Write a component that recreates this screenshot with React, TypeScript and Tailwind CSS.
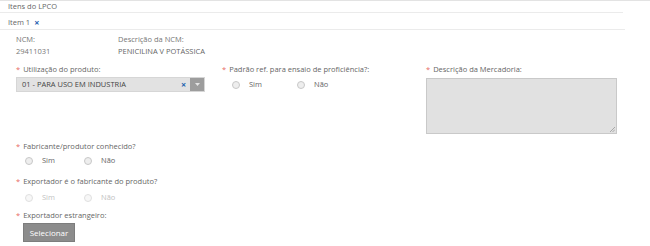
import React from "react";

const Req = () => <span className="text-[#e8685f] mr-[3px]">*</span>;

function Radio({ label, disabled }: { label: string; disabled?: boolean }) {
  return (
    <div className={`flex items-center ${disabled ? "text-[#c2c2c2]" : "text-[#666]"}`}>
      <span
        className={`w-[8px] h-[8px] rounded-full border ${
          disabled ? "border-[#e0e0e0] bg-[#f7f7f7]" : "border-[#c8c8c8] bg-[#eeeeee]"
        }`}
      />
      <span className="ml-[9px]">{label}</span>
    </div>
  );
}

export default function App() {
  return (
    <div
      className="w-[650px] h-[246px] bg-white text-[7.5px] text-[#555] overflow-hidden"
      style={{ fontFamily: '"Open Sans", sans-serif' }}
    >
      <div className="border-t border-[#e3e3e3]">
        <div className="w-[623px] h-[12px] border-b border-[#ebebeb] pl-[8px] flex items-center text-[#666]">
          Itens do LPCO
        </div>
        <div className="w-[625px] h-[17px] border-b border-[#ebebeb] pl-[8px] flex items-center pt-[4px] text-[#666]">
          Item 1
          <span className="ml-[4px] text-[#1e62b0] font-bold text-[9px] leading-[12px]">×</span>
        </div>
        <div className="flex pl-[16px] pt-[4px]">
          <div className="w-[102px]">
            <div className="h-[12px] flex items-center text-[#777]">NCM:</div>
            <div className="h-[12px] flex items-center text-[#777]">29411031</div>
          </div>
          <div>
            <div className="h-[12px] flex items-center text-[#777]">Descrição da NCM:</div>
            <div className="h-[12px] flex items-center text-[#666]">PENICILINA V POTÁSSICA</div>
          </div>
        </div>
        <div className="flex pl-[16px] pt-[6px]">
          <div className="w-[189px]">
            <div className="h-[12px] flex items-center text-[#666]">
              <Req />
              Utilização do produto:
            </div>
            <div className="mt-[1px] h-[15px] flex bg-[#e2e2e2] border border-[#d6d6d6]">
              <div className="flex-1 flex items-center pl-[5px] text-[#444]">01 - PARA USO EM INDUSTRIA</div>
              <div className="w-[13px] flex items-center justify-center text-[#1e62b0] font-bold text-[9px]">×</div>
              <div className="w-[14px] bg-[#9d9d9d] flex items-center justify-center">
                <svg width="5" height="3" viewBox="0 0 5 3">
                  <path d="M0 0 L5 0 L2.5 3 Z" fill="#e5e5e5" />
                </svg>
              </div>
            </div>
          </div>
          <div className="ml-[17px] w-[204px]">
            <div className="h-[12px] flex items-center text-[#666]">
              <Req />
              Padrão ref. para ensaio de proficiência?:
            </div>
            <div className="flex mt-[3px] pl-[10px] h-[12px] items-center">
              <div className="w-[65px]">
                <Radio label="Sim" />
              </div>
              <Radio label="Não" />
            </div>
          </div>
          <div>
            <div className="h-[12px] flex items-center text-[#666]">
              <Req />
              Descrição da Mercadoria:
            </div>
            <div className="relative mt-[2px] w-[191px] h-[56px] bg-[#e1e1e1] border border-[#c9c9c9]">
              <svg className="absolute right-[1px] bottom-[1px]" width="5" height="5" viewBox="0 0 5 5">
                <path d="M5 0 L0 5 M5 2.5 L2.5 5" stroke="#999" strokeWidth="0.8" />
              </svg>
            </div>
          </div>
        </div>
        <div className="pl-[16px] mt-[7px]">
          <div className="h-[12px] flex items-center text-[#666]">
            <Req />
            Fabricante/produtor conhecido?
          </div>
          <div className="flex mt-[2px] pl-[9px] h-[12px] items-center">
            <div className="w-[59px]">
              <Radio label="Sim" />
            </div>
            <Radio label="Não" />
          </div>
          <div className="mt-[9px] h-[12px] flex items-center text-[#666]">
            <Req />
            Exportador é o fabricante do produto?
          </div>
          <div className="flex mt-[4px] pl-[9px] h-[12px] items-center">
            <div className="w-[59px]">
              <Radio label="Sim" disabled />
            </div>
            <Radio label="Não" disabled />
          </div>
          <div className="mt-[6px] h-[12px] flex items-center text-[#666]">
            <Req />
            Exportador estrangeiro:
          </div>
          <div className="mt-[1px] ml-[7px] w-[52px] h-[19px] bg-[#8c8c8c] border border-[#7d7d7d] flex items-center justify-center text-white text-[8px]">
            Selecionar
          </div>
        </div>
      </div>
    </div>
  );
}
